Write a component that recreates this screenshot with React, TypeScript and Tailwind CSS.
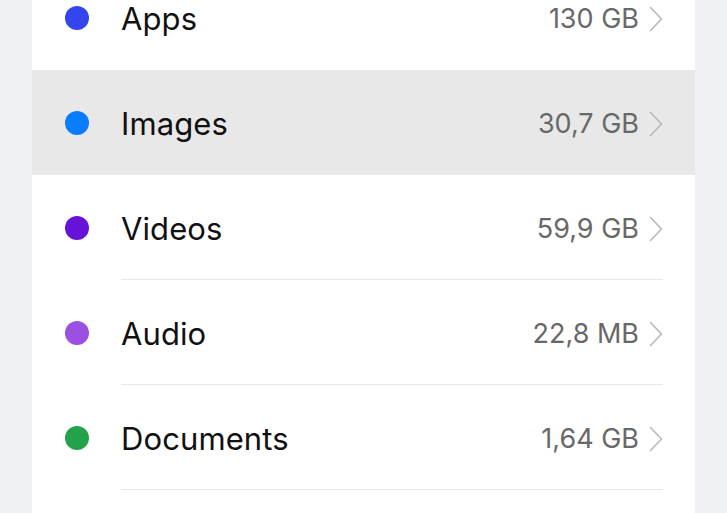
const rows = [
  { label: "Apps", value: "130 GB", color: "bg-[#3345ee]" },
  { label: "Images", value: "30,7 GB", color: "bg-[#0a7cff]", active: true },
  { label: "Videos", value: "59,9 GB", color: "bg-[#6712d8]" },
  { label: "Audio", value: "22,8 MB", color: "bg-[#9b50e2]" },
  { label: "Documents", value: "1,64 GB", color: "bg-[#23a24b]" },
  { label: "", value: "", color: "" },
];

function Chevron() {
  return (
    <svg width="14" height="26" viewBox="0 0 14 26" fill="none" className="shrink-0">
      <polyline points="1.5,1.5 12.5,13 1.5,24.5" stroke="#b8b8b8" strokeWidth="1.6" strokeLinecap="round" strokeLinejoin="round" />
    </svg>
  );
}

export default function App() {
  return (
    <div className="w-[727px] h-[513px] overflow-hidden bg-[#f0f1f4] font-['Inter',sans-serif]">
      <div className="ml-[32px] w-[663px] -mt-[35px] bg-white">
        {rows.map((r, i) => (
          <div
            key={i}
            className={`flex items-center h-[105px] pl-[33px] ${r.active ? "bg-[#e8e8e8]" : ""}`}
          >
            <div className={`w-6 h-6 rounded-full shrink-0 ${r.color}`} />
            <div
              className={`ml-[32px] mr-[32px] flex-1 h-full flex items-center justify-between pt-[3px] ${
                r.active || i === 0 || i === rows.length - 1 ? "" : "border-b border-[#e6e6e6]"
              }`}
            >
              <span className="text-[31px] leading-[36px] text-[#111111] tracking-[0.1px]">{r.label}</span>
              {r.value && (
                <div className="flex items-center gap-[10px]">
                  <span className="text-[27px] leading-[32px] text-[#686868]">{r.value}</span>
                  <Chevron />
                </div>
              )}
            </div>
          </div>
        ))}
      </div>
    </div>
  );
}
